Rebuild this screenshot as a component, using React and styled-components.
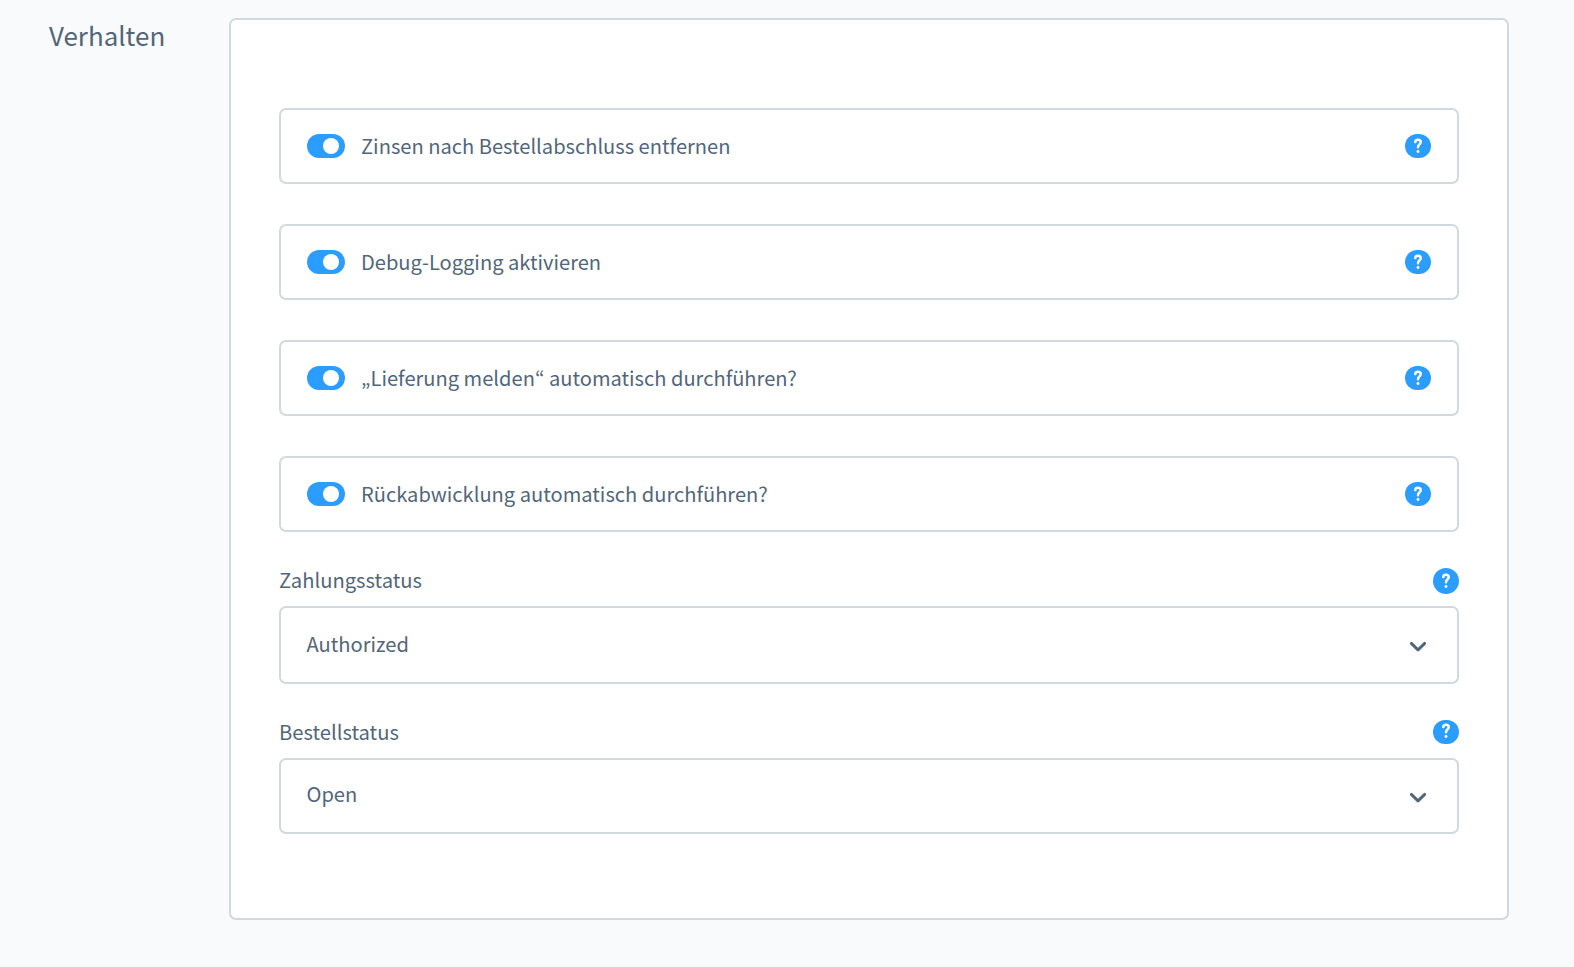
import React from "react";
import styled, { createGlobalStyle } from "styled-components";

const text = "#52667a";
const border = "#d1d9e0";
const blue = "#2b9dff";

const GlobalStyle = createGlobalStyle`
  *, *::before, *::after { box-sizing: border-box; }
  body {
    margin: 0;
    background: #f9fafc;
    color: ${text};
    font-family: "Noto Sans CJK KR", "Noto Sans", sans-serif;
    font-size: 20.1px;
    -webkit-font-smoothing: antialiased;
  }
`;

const Page = styled.main`
  display: flex;
  align-items: flex-start;
  width: 1574px;
  height: 967px;
  padding-top: 18px;
`;

const Heading = styled.h2`
  flex: none;
  width: 229px;
  margin: 0;
  padding-left: 49px;
  font-size: 25.95px;
  font-weight: 400;
  line-height: 34px;
`;

const Card = styled.section`
  display: flex;
  flex-direction: column;
  width: 1280px;
  height: 902px;
  padding: 88px 48px 0;
  background: #fff;
  border: 2px solid ${border};
  border-radius: 7px;
`;

const SwitchList = styled.div`
  display: flex;
  flex-direction: column;
  gap: 40px;
`;

const SwitchRow = styled.label`
  display: flex;
  align-items: center;
  height: 76px;
  padding: 0 26px;
  border: 2px solid ${border};
  border-radius: 7px;
`;

const Track = styled.span`
  display: flex;
  align-items: center;
  justify-content: flex-end;
  width: 38px;
  height: 24px;
  padding: 4px 6px;
  margin-right: 16px;
  background: ${blue};
  border-radius: 12px;
`;

const Knob = styled.span`
  width: 16px;
  height: 16px;
  background: #fff;
  border-radius: 50%;
`;

const SwitchLabel = styled.span`
  flex: 1;
  height: 24px;
  line-height: 24px;
  white-space: nowrap;
`;

const HelpBadge = styled.span`
  flex: none;
  display: flex;
  justify-content: center;
  width: 26px;
  height: ${(p) => p.$height}px;
  padding-top: ${(p) => p.$glyphTop}px;
  background: ${blue};
  border-radius: 13px;
`;

const Field = styled.div`
  display: flex;
  flex-direction: column;
  padding-top: 36px;
`;

const FieldHead = styled.div`
  display: flex;
  align-items: flex-start;
  justify-content: space-between;
  height: 38px;
  font-size: 20.2px;
  line-height: 24px;
`;

const SelectBox = styled.div`
  display: flex;
  align-items: flex-start;
  justify-content: space-between;
  height: ${(p) => p.$height}px;
  padding: ${(p) => p.$top}px 30px 0 25.5px;
  line-height: 26px;
  border: 2px solid ${border};
  border-radius: 7px;
`;

const ChevronIcon = styled.svg`
  flex: none;
  margin-top: ${(p) => p.$top}px;
`;

function Help({ height = 24, glyphTop = 4 }) {
  return (
    <HelpBadge $height={height} $glyphTop={glyphTop}>
      <svg width="10" height="16" viewBox="0 0 10 16" fill="none">
        <path
          d="M2.3 4.1C2.4 2.7 3.5 1.8 5 1.8c1.6 0 2.7.9 2.7 2.4C7.7 6.3 5 6.6 5 9.2"
          stroke="#fff"
          strokeWidth="2.5"
          strokeLinecap="round"
        />
        <circle cx="5" cy="13.5" r="1.4" fill="#fff" />
      </svg>
    </HelpBadge>
  );
}

function Chevron({ top }) {
  return (
    <ChevronIcon $top={top} width="18" height="12" viewBox="0 0 18 12" fill="none">
      <path d="M2.3 2.4 9 8.9l6.7-6.5" stroke={text} strokeWidth="2.9" strokeLinecap="round" strokeLinejoin="round" />
    </ChevronIcon>
  );
}

const switches = [
  "Zinsen nach Bestellabschluss entfernen",
  "Debug-Logging aktivieren",
  "„Lieferung melden“ automatisch durchführen?",
  "Rückabwicklung automatisch durchführen?",
];

export default function App() {
  return (
    <>
      <GlobalStyle />
      <Page>
        <Heading>Verhalten</Heading>
        <Card>
          <SwitchList>
            {switches.map((label) => (
              <SwitchRow key={label}>
                <Track>
                  <Knob />
                </Track>
                <SwitchLabel>{label}</SwitchLabel>
                <Help />
              </SwitchRow>
            ))}
          </SwitchList>
          <Field>
            <FieldHead>
              <span>Zahlungsstatus</span>
              <Help height={26} glyphTop={5} />
            </FieldHead>
            <SelectBox $height={78} $top={23}>
              <span>Authorized</span>
              <Chevron top={10} />
            </SelectBox>
          </Field>
          <Field>
            <FieldHead>
              <span>Bestellstatus</span>
              <Help glyphTop={3} />
            </FieldHead>
            <SelectBox $height={76} $top={21}>
              <span>Open</span>
              <Chevron top={11} />
            </SelectBox>
          </Field>
        </Card>
      </Page>
    </>
  );
}
